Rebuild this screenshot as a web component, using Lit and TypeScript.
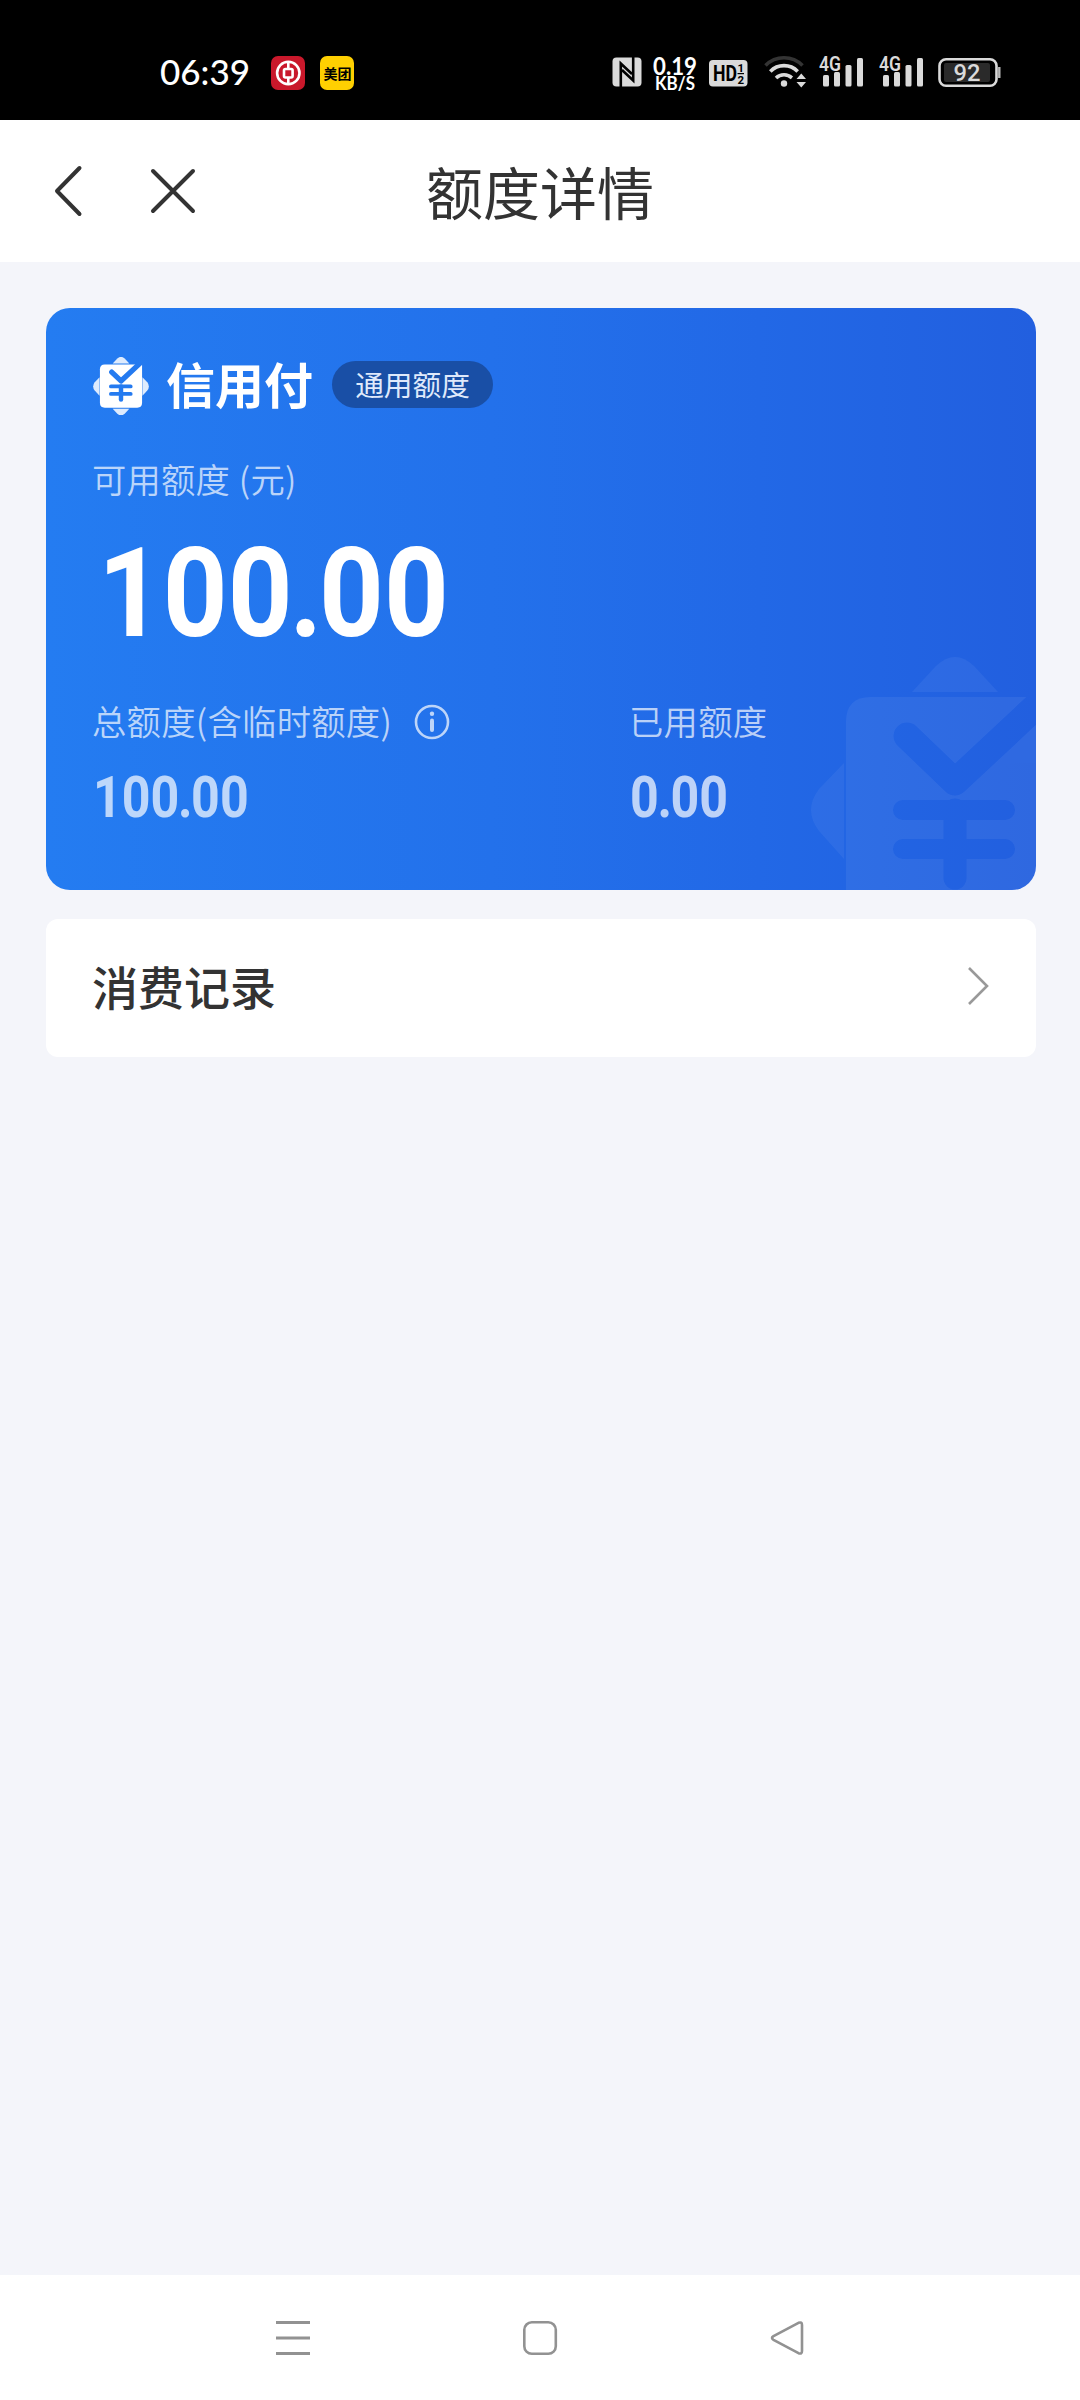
import { LitElement, html, css } from "lit";
import { customElement, property } from "lit/decorators.js";

/** Yuan seal: a square over a diamond, with the yuan sign cut out of it. */
@customElement("yuan-mark")
class YuanMark extends LitElement {
  static styles = css`
    :host { display: block; }
    svg { display: block; width: 100%; height: 100%; }
    .petal { fill: #fff; fill-opacity: 0.85; }
    .plate { fill: #fff; }
    .cut { fill: none; stroke: #000; stroke-linecap: round; stroke-linejoin: round; }
  `;
  render() {
    return html`<svg viewBox="-150 -151 300 302">
      <mask id="m" maskUnits="userSpaceOnUse" x="-150" y="-151" width="300" height="302">
        <rect x="-150" y="-151" width="300" height="302" fill="#fff" />
        <path class="cut" stroke-width="27" d="M-48 -72L0 -26L120 -138" />
        <path class="cut" stroke-width="20" d="M-52 2H50M-52 41H50" />
        <path class="cut" stroke-width="23" d="M0 2V70" />
      </mask>
      <g mask="url(#m)">
        <path class="petal" d="M-43 -116L-19 -142Q0 -160 19 -142L43 -116Z" />
        <path class="petal" d="M-43 118L-19 143Q0 160 19 143L43 118Z" />
        <path class="petal" d="M-111 -45L-136 -19Q-152 2 -136 23L-111 51Z" />
        <path class="petal" d="M111 -45L136 -19Q152 2 136 23L111 51Z" />
        <path class="plate" d="M-84 -111H109V87Q109 112 84 112H-84Q-109 112 -109 87V-86Q-109 -111 -84 -111Z" />
      </g>
    </svg>`;
  }
}

@customElement("status-bar")
class StatusBar extends LitElement {
  static styles = css`
    :host {
      display: flex; justify-content: space-between; height: 120px; box-sizing: border-box;
      padding: 50px 74px 20px 158px; background: #000; color: #fff;
    }
    .side { display: flex; align-items: flex-start; height: 46px; }
    svg { display: block; flex: none; overflow: visible; }
    .time { width: 96px; }
    .bank { margin: 6px 0 0 17px; }
    .shop { margin: 6px 0 0 15px; }
    .nfc { margin-top: 7px; }
    .speed { margin-left: 11px; }
    .hd { margin-left: 11px; }
    .wifi { margin-left: 16px; }
    .cell { margin-left: 11px; }
    .cell2 { margin-left: 14px; }
    .battery { margin-left: 13px; }
    text { font-family: "Lato", "Noto Sans CJK SC", sans-serif; fill: #fff; }
    .soft, .soft text { fill: #dadada; }
    text.dark, .dark { fill: #000; }
    .num { font-family: "Roboto", sans-serif; }
  `;
  private signal(cls: string) {
    return html`<svg class=${cls} width="46" height="46">
      <g class="soft">
        <text class="num" x="0" y="20.5" font-size="19.5" font-weight="600" textLength="22" lengthAdjust="spacingAndGlyphs">4G</text>
        <rect x="4" y="25" width="6" height="11.5" rx="1.5" />
        <rect x="15" y="22" width="6" height="14.5" rx="1.5" />
        <rect x="26.500" y="15" width="6" height="21.500" rx="1.5" />
        <rect x="38" y="8" width="6" height="28.500" rx="1.5" />
      </g>
    </svg>`;
  }
  render() {
    return html`
      <div class="side">
        <svg class="time" height="46">
          <text x="2" y="35" font-size="35" font-weight="500" textLength="90" lengthAdjust="spacingAndGlyphs">06:39</text>
        </svg>
        <svg class="bank" width="34" height="34">
          <rect width="34" height="34" rx="7" fill="#c9182b" />
          <g fill="none" stroke="#fff" stroke-width="2.6">
            <circle cx="17.300" cy="17" r="11.200" />
            <rect x="13" y="13" width="8.600" height="8.500" rx="1.500" />
            <path d="M17.300 6V13M17.300 21.500V28" />
          </g>
        </svg>
        <svg class="shop" width="34" height="34">
          <rect width="34" height="34" rx="7" fill="#ffd001" />
          <text class="dark" x="3.500" y="22.500" font-size="14" font-weight="700" textLength="28">美团</text>
        </svg>
      </div>
      <div class="side">
        <svg class="nfc" width="30" height="30">
          <rect x="0.500" y="0.500" width="29" height="29" rx="4" fill="#dadada" />
          <path d="M8.800 30V6.500L20 17M21.200 0V23.500L10 13" fill="none" stroke="#000" stroke-width="2.600" />
        </svg>
        <svg class="speed" width="45" height="46">
          <text x="0" y="25" font-size="24.500" font-weight="700" textLength="44" lengthAdjust="spacingAndGlyphs">0.19</text>
          <text x="2" y="40" font-size="18" font-weight="700" textLength="40" lengthAdjust="spacingAndGlyphs">KB/S</text>
        </svg>
        <svg class="hd" width="39" height="46">
          <rect x="0" y="10" width="38.500" height="26.500" rx="4" fill="#dadada" />
          <text class="dark num" x="4" y="31" font-size="22" font-weight="700" textLength="24" lengthAdjust="spacingAndGlyphs">HD</text>
          <text class="dark num" x="28.500" y="22" font-size="11.500" font-weight="700">1</text>
          <text class="dark num" x="28.500" y="33.500" font-size="11.500" font-weight="700">2</text>
          <path d="M28.500 23.600H35" stroke="#000" stroke-width="1.200" />
        </svg>
        <svg class="wifi" width="44" height="46" fill="none" stroke-width="3.600">
          <path d="M1.500 15.500A26 26 0 0 1 38.500 15.500" stroke="#343434" />
          <path d="M6.300 21.500A19 19 0 0 1 33.700 21.500" stroke="#dadada" />
          <path d="M12 28A11.500 11.500 0 0 1 28 28" stroke="#dadada" />
          <circle cx="20" cy="33.500" r="3.200" fill="#dadada" />
          <path d="M28 28L34 22H43V38H30Z" fill="#000" />
          <path d="M37.300 23.500L42 29H32.500ZM37.300 37.500L42 32H32.500Z" fill="#dadada" />
        </svg>
        ${this.signal("cell")}${this.signal("cell2")}
        <svg class="battery" width="68" height="46">
          <rect x="1.500" y="9.300" width="57" height="26.500" rx="6.500" fill="none" stroke="#dadada" stroke-width="2.600" />
          <rect x="6" y="13" width="46" height="19" rx="2" fill="#2a2a2a" />
          <path d="M61.300 17V28" stroke="#bbb" stroke-width="2.400" />
          <g class="soft"><text class="num" x="15.500" y="30.500" font-size="23.500" font-weight="500" textLength="27" lengthAdjust="spacingAndGlyphs">92</text></g>
        </svg>
      </div>
    `;
  }
}

/** An amount whose decimal point is set tight between its digits. */
@customElement("money-value")
class MoneyValue extends LitElement {
  @property() value = "";
  static styles = css`
    :host { display: block; font-family: "Roboto", sans-serif; font-weight: 700; white-space: nowrap; transform-origin: 0 50%; }
    .dot { margin: 0 -0.028em; }
  `;
  render() {
    const [whole, cents] = this.value.split(".");
    return html`${whole}<span class="dot">.</span>${cents}`;
  }
}

@customElement("limit-stat")
class LimitStat extends LitElement {
  @property() label = "";
  @property() value = "";
  @property({ type: Boolean }) info = false;
  static styles = css`
    :host { display: block; color: rgba(255, 255, 255, 0.7); }
    .label {
      display: flex; align-items: center; gap: 22px; height: 48px; line-height: 48px;
      font-size: 34.300px; letter-spacing: 0.3px; font-weight: 350; white-space: nowrap;
    }
    .label span { padding-bottom: 4px; }
    .value { margin: 22px 0 0 1px; height: 60px; line-height: 60px; font-size: 56.500px; transform: scaleX(0.888); }
    svg { display: block; }
  `;
  render() {
    return html`
      <div class="label">
        <span>${this.label}</span>
        ${this.info
          ? html`<svg width="36" height="36" fill="none" stroke="currentColor">
              <circle cx="18" cy="18" r="16" stroke-width="2.600" />
              <path d="M18 16.500V26" stroke-width="4" stroke-linecap="round" />
              <circle cx="18" cy="9.800" r="2.200" fill="currentColor" stroke="none" />
            </svg>`
          : null}
      </div>
      <money-value class="value" value=${this.value}></money-value>
    `;
  }
}

@customElement("app-root")
class AppRoot extends LitElement {
  static styles = css`
    :host {
      display: flex; flex-direction: column; width: 1080px; height: 2400px;
      background: #f4f5fa; font-family: "Noto Sans CJK SC", sans-serif; color: #333;
    }
    svg { display: block; flex: none; }
    .header {
      display: grid; grid-template-columns: 240px 1fr 240px; align-items: center;
      height: 142px; background: #fff;
    }
    .actions { display: flex; align-items: center; gap: 64px; padding-left: 50px; }
    .title { padding-bottom: 3px; text-align: center; font-size: 57px; line-height: 80px; }
    .content { flex: 1; display: flex; flex-direction: column; gap: 29px; padding: 46px 44px 0 46px; }
    .card {
      position: relative; overflow: hidden; height: 582px; box-sizing: border-box;
      padding: 48px 0 0 46px; border-radius: 24px; color: #fff;
      background: linear-gradient(90deg, #247cf1 0%, #2371eb 45%, #2268e6 72%, #225fdf 100%);
    }
    .watermark { position: absolute; left: 759px; top: 349px; width: 300px; height: 302px; opacity: 0.06; }
    .brand { display: flex; align-items: center; height: 60px; }
    .logo { width: 58px; height: 60px; }
    .name { margin: 0 0 6px 16px; font-size: 49px; font-weight: 700; line-height: 60px; }
    .badge {
      margin: 0 0 3px 19px; width: 161px; height: 47px; line-height: 45px; border-radius: 24px;
      background: #194fa6; color: #dfe9fb; font-size: 28.700px; text-align: center;
    }
    .caption {
      margin-top: 38px; height: 48px; line-height: 48px; font-size: 34.300px; letter-spacing: 0.2px;
      word-spacing: 1px; font-weight: 350; color: rgba(255, 255, 255, 0.7);
    }
    .amount { margin: 31px 0 0 6px; height: 120px; font-size: 124.500px; line-height: 120px; transform: scaleX(0.908); }
    .stats { display: grid; grid-template-columns: 537px 1fr; margin-top: 45px; }
    .row {
      display: flex; align-items: center; justify-content: space-between; height: 138px; box-sizing: border-box;
      padding: 0 47px 4px 46px; border-radius: 12px; background: #fff;
      font-size: 46px; font-weight: 500; line-height: 60px;
    }
    .row span { padding-bottom: 2px; }
    .nav { display: flex; justify-content: space-between; height: 125px; box-sizing: border-box; padding: 44px 274px 0; background: #fff; }
  `;
  render() {
    return html`
      <status-bar></status-bar>
      <header class="header">
        <div class="actions">
          <svg width="36" height="56" fill="none" stroke="#333" stroke-width="4" stroke-linecap="round" stroke-linejoin="round">
            <path d="M29.500 5L7 28L29.500 51" />
          </svg>
          <svg width="48" height="56" fill="none" stroke="#333" stroke-width="4" stroke-linecap="round">
            <path d="M3 8L43 48M43 8L3 48" />
          </svg>
        </div>
        <div class="title">额度详情</div>
      </header>
      <main class="content">
        <section class="card">
          <yuan-mark class="watermark"></yuan-mark>
          <div class="brand">
            <yuan-mark class="logo"></yuan-mark>
            <span class="name">信用付</span>
            <span class="badge">通用额度</span>
          </div>
          <div class="caption">可用额度 (元)</div>
          <money-value class="amount" value="100.00"></money-value>
          <div class="stats">
            <limit-stat label="总额度(含临时额度)" value="100.00" info></limit-stat>
            <limit-stat label="已用额度" value="0.00"></limit-stat>
          </div>
        </section>
        <section class="row">
          <span>消费记录</span>
          <svg width="22" height="42" fill="none" stroke="#999" stroke-width="2.600"><path d="M2 3L20 21L2 39" /></svg>
        </section>
      </main>
      <nav class="nav">
        <svg width="38" height="38" stroke="#929292" stroke-width="3"><path d="M2 3.500H36M2 19H36M2 34.500H36" /></svg>
        <svg width="38" height="38" fill="none" stroke="#929292" stroke-width="2.600"><rect x="3.300" y="3.300" width="31.500" height="31.500" rx="7.500" /></svg>
        <svg width="38" height="38" fill="none" stroke="#929292" stroke-width="2.600" stroke-linejoin="round">
          <path d="M5.500 17.200L30.500 3.800Q34 2.500 34 6V32Q34 35.500 30.500 34.200L5.500 20.800Q2.500 19 5.500 17.200Z" />
        </svg>
      </nav>
    `;
  }
}
